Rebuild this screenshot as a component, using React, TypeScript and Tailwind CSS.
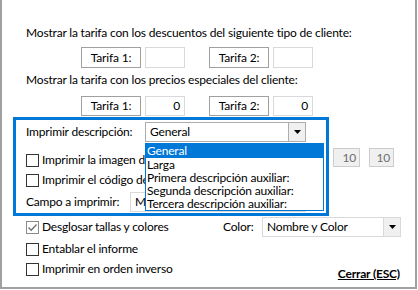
import React from 'react';

const FONT = { fontFamily: 'Lato, "Noto Sans", "Liberation Sans", sans-serif' };

function Arrow() {
  return (
    <svg width="7" height="4" viewBox="0 0 7 4" className="block">
      <polygon points="0,0 7,0 3.5,4" fill="#000" />
    </svg>
  );
}

function Check({ label, checked = false }: { label: string; checked?: boolean }) {
  return (
    <div className="flex h-[16px] items-center gap-[3px] whitespace-nowrap">
      <span
        className={`flex h-[13px] w-[13px] shrink-0 items-center justify-center border bg-white ${
          checked ? 'border-[#8a8a8a]' : 'border-[#333333]'
        }`}
      >
        {checked && (
          <svg width="11" height="11" viewBox="0 0 11 11">
            <polyline points="1.5,5.5 4.2,8.2 9.5,2.5" fill="none" stroke="#6f6f6f" strokeWidth="1.3" />
          </svg>
        )}
      </span>
      <span>{label}</span>
    </div>
  );
}

function TarifaRow({ v1, v2, h }: { v1: string; v2: string; h: string }) {
  return (
    <div className={`ml-[79px] flex ${h}`}>
      <div className="flex w-[60px] items-center justify-center border border-[#a0a0a0]">Tarifa 1:</div>
      <div className="ml-[4px] flex w-[40px] items-center justify-end border border-[#d9d9d9] pr-[4px]">{v1}</div>
      <div className="ml-[24px] flex w-[60px] items-center justify-center border border-[#a0a0a0]">Tarifa 2:</div>
      <div className="ml-[4px] flex w-[40px] items-center justify-end border border-[#d9d9d9] pr-[4px]">{v2}</div>
    </div>
  );
}

function Combo({ value, w, border }: { value: string; w: string; border: string }) {
  return (
    <div className={`flex h-[20px] shrink-0 ${w} border ${border} bg-white`}>
      <div className="flex flex-1 items-center overflow-hidden pl-[4px]">{value}</div>
      <div className={`flex w-[17px] items-center justify-center border-l ${border} bg-[#f0f0f0]`}>
        <Arrow />
      </div>
    </div>
  );
}

export default function App() {
  const items = [
    'General',
    'Larga',
    'Primera descripción auxiliar:',
    'Segunda descripción auxiliar:',
    'Tercera descripción auxiliar:',
  ];

  return (
    <div
      className="relative h-[290px] w-[418px] whitespace-nowrap bg-white text-[12px] leading-[16px] tracking-[-0.18px] text-black"
      style={FONT}
    >
      <div className="flex h-[289px] w-[417px] flex-col border-b-2 border-l-2 border-r-2 border-[#a0a0a0] pt-[25px]">
        <div className="ml-[24px]">Mostrar la tarifa con los descuentos del siguiente tipo de cliente:</div>
        <div className="mt-[6px]">
          <TarifaRow v1="" v2="" h="h-[21px]" />
        </div>
        <div className="ml-[24px] mt-[4px]">Mostrar la tarifa con los precios especiales del cliente:</div>
        <div className="mt-[8px]">
          <TarifaRow v1="0" v2="0" h="h-[20px]" />
        </div>

        <div className="mt-[1px] flex">
          {/* Group box */}
          <div className="ml-[11px] flex h-[99px] w-[316px] shrink-0 flex-col border-[3px] border-[#0078d7] pl-[10px]">
            <div className="mt-[2px] flex items-center">
              <span className="w-[119px] shrink-0">Imprimir descripción:</span>
              <Combo value="General" w="w-[161px]" border="border-[#adadad]" />
            </div>
            <div className="mt-[10px]">
              <Check label="Imprimir la imagen del artículo" />
            </div>
            <div className="mt-[4px]">
              <Check label="Imprimir el código de barras" />
            </div>
            <div className="mt-[4px] flex items-center">
              <span className="w-[104px] shrink-0">Campo a imprimir:</span>
              <Combo value="Marca" w="w-[176px]" border="border-[#d9d9d9]" />
            </div>
          </div>

          <div className="ml-[4px] mt-[31px] flex h-[19px] text-[#6d6d6d]">
            <div className="flex w-[27px] items-center justify-end border border-[#cccccc] bg-[#f0f0f0] pr-[3px]">10</div>
            <div className="ml-[9px] flex w-[25px] items-center justify-end border border-[#cccccc] bg-[#f0f0f0] pr-[3px]">10</div>
          </div>
        </div>

        <div className="mt-[1px] flex h-[20px] items-center pl-[24px] pr-[15px]">
          <div className="w-[197px] shrink-0">
            <Check label="Desglosar tallas y colores" checked />
          </div>
          <span className="w-[39px] shrink-0">Color:</span>
          <Combo value="Nombre y Color" w="w-[139px]" border="border-[#d9d9d9]" />
        </div>
        <div className="mt-[4px] pl-[24px]">
          <Check label="Entablar el informe" />
        </div>
        <div className="mt-[4px] flex pl-[24px] pr-[15px]">
          <Check label="Imprimir en orden inverso" />
          <span className="ml-auto mt-[5px] font-bold underline">Cerrar (ESC)</span>
        </div>
      </div>

      {/* Open dropdown list */}
      <div className="absolute left-[145px] top-[143px] flex h-[68px] w-[179px] flex-col border border-[#0078d7] bg-white leading-[13px]">
        {items.map((it, i) => (
          <div
            key={it}
            className={`pl-[1px] ${i === 0 ? 'h-[14px] bg-[#0078d7] text-white' : 'h-[13px]'}`}
          >
            {it}
          </div>
        ))}
      </div>
    </div>
  );
}
